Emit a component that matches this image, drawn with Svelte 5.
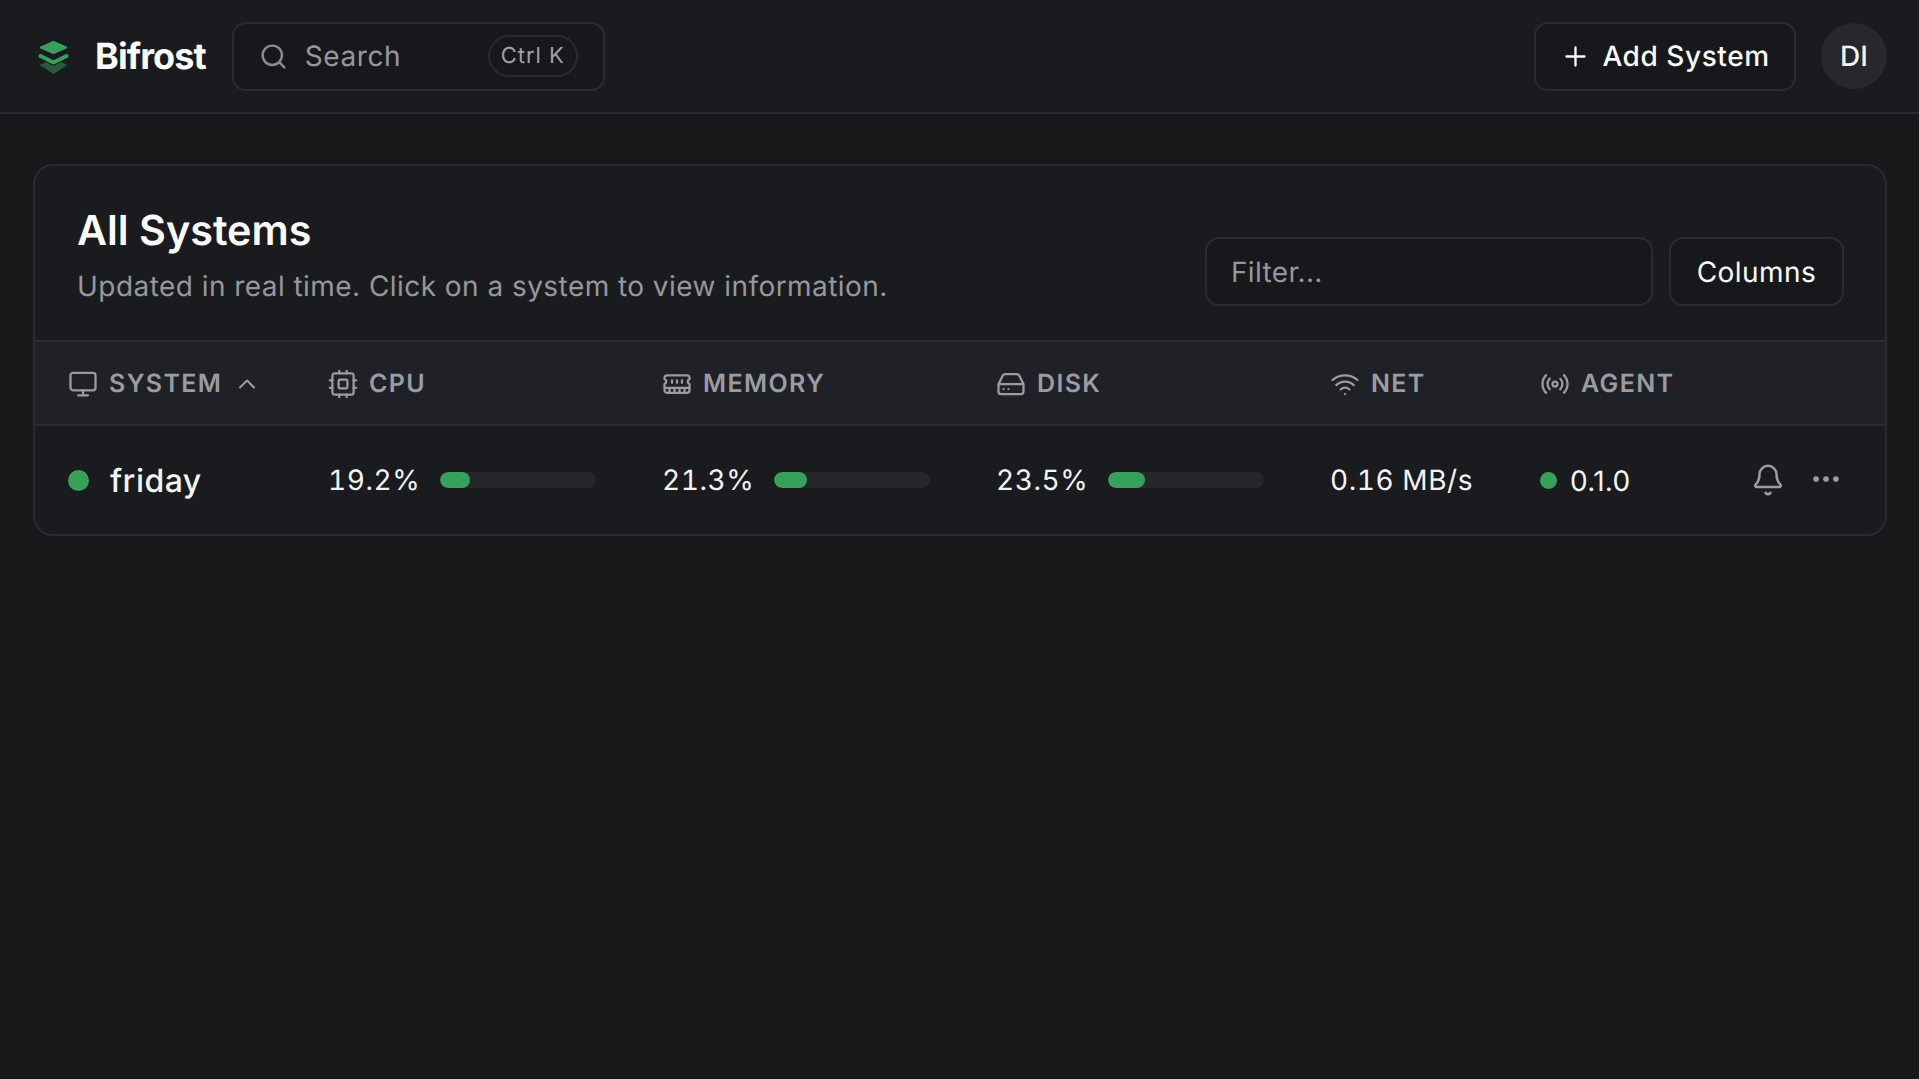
<script>
  const metrics = [
    { value: '19.2%', pct: 19.2 },
    { value: '21.3%', pct: 21.3 },
    { value: '23.5%', pct: 23.5 }
  ];
</script>

<div class="page">
  <header class="topbar">
    <div class="brand">
      <svg class="logo" viewBox="0 0 32 34">
        <path class="l3" d="M1.5 24 8 21 15.5 25 23 21 29.5 24 15.5 33Z" />
        <path class="l2" d="M2.5 15 15.5 21.5 28.5 15" />
        <path class="l1" d="M15.5 1 28 6.5 15.5 12 3 6.5Z" />
      </svg>
      <span class="name">Bifrost</span>
    </div>
    <div class="search">
      <svg class="ic search-ic" viewBox="0 0 24 24"><circle cx="11" cy="11" r="8" /><path d="m21 21-4.3-4.3" /></svg>
      <span class="search-text">Search</span>
      <kbd>Ctrl K</kbd>
    </div>
    <div class="spacer"></div>
    <button class="add">
      <svg class="ic plus" viewBox="0 0 24 24"><path d="M5 12h14M12 5v14" /></svg>
      Add System
    </button>
    <div class="avatar">DI</div>
  </header>

  <main class="main">
    <section class="card">
      <div class="card-head">
        <div class="titles">
          <h1>All Systems</h1>
          <p>Updated in real time. Click on a system to view information.</p>
        </div>
        <div class="tools">
          <div class="filter">Filter...</div>
          <button class="columns">Columns</button>
        </div>
      </div>

      <div class="grid head">
        <div class="th">
          <svg class="ic" viewBox="0 0 24 24"><rect x="2" y="3" width="20" height="14" rx="2" /><path d="M8 21h8M12 17v4" /></svg>
          <span>System</span>
          <svg class="ic chev" viewBox="0 0 24 24"><path d="m18 15-6-6-6 6" /></svg>
        </div>
        <div class="th">
          <svg class="ic" viewBox="0 0 24 24"><rect x="3.5" y="3.5" width="17" height="17" rx="2" /><rect x="8.5" y="8.5" width="7" height="7" rx="1" /><path d="M15 1.5v2M15 20.5v2M1.5 15h2M1.5 9h2M20.5 15h2M20.5 9h2M9 1.5v2M9 20.5v2" /></svg>
          <span>CPU</span>
        </div>
        <div class="th">
          <svg class="ic" viewBox="0 0 24 24"><path d="M6 19v-3M10 19v-3M14 19v-3M18 19v-3M8 11V9M16 11V9M12 11V9M2 15h20M2 7a2 2 0 0 1 2-2h16a2 2 0 0 1 2 2v1.1a2 2 0 0 0 0 3.837V17a2 2 0 0 1-2 2H4a2 2 0 0 1-2-2v-5.1a2 2 0 0 0 0-3.837Z" /></svg>
          <span>Memory</span>
        </div>
        <div class="th">
          <svg class="ic" viewBox="0 0 24 24"><path d="M22 12H2M5.45 5.11 2 12v6a2 2 0 0 0 2 2h16a2 2 0 0 0 2-2v-6l-3.45-6.89A2 2 0 0 0 16.76 4H7.24a2 2 0 0 0-1.79 1.11zM6 16h.01M10 16h.01" /></svg>
          <span>Disk</span>
        </div>
        <div class="th">
          <svg class="ic" viewBox="0 0 24 24"><path d="M12 20h.01M2 8.82a15 15 0 0 1 20 0M5 12.859a10 10 0 0 1 14 0M8.5 16.429a5 5 0 0 1 7 0" /></svg>
          <span>Net</span>
        </div>
        <div class="th">
          <svg class="ic" viewBox="0 0 24 24"><path d="M4.9 19.1C1 15.2 1 8.8 4.9 4.9M7.8 16.2c-2.3-2.3-2.3-6.1 0-8.5M16.2 7.8c2.3 2.3 2.3 6.1 0 8.5M19.1 4.9C23 8.8 23 15.1 19.1 19" /><circle cx="12" cy="12" r="2" /></svg>
          <span>Agent</span>
        </div>
        <div></div>
      </div>

      <div class="grid row">
        <div class="sys"><i class="dot"></i><span>friday</span></div>
        {#each metrics as m}
          <div class="metric">
            <span class="val">{m.value}</span>
            <div class="track"><div class="fill" style="width: {m.pct}%"></div></div>
          </div>
        {/each}
        <div class="net">0.16 MB/s</div>
        <div class="agent"><i class="dot small"></i><span>0.1.0</span></div>
        <div class="actions">
          <svg class="ic bell" viewBox="0 0 24 24"><path d="M10.268 21a2 2 0 0 0 3.464 0M3.262 15.326A1 1 0 0 0 4 17h16a1 1 0 0 0 .74-1.673C19.41 13.956 18 12.499 18 8A6 6 0 0 0 6 8c0 4.499-1.411 5.956-2.738 7.326" /></svg>
          <svg class="ic more" viewBox="0 0 24 24"><circle cx="12" cy="12" r="1" /><circle cx="19" cy="12" r="1" /><circle cx="5" cy="12" r="1" /></svg>
        </div>
      </div>
    </section>
  </main>
</div>

<style>
  :global(body) {
    margin: 0;
    background: #16181a;
    font-family: Inter, "Liberation Sans", sans-serif;
    color: #f4f4f5;
    text-rendering: geometricPrecision;
  }
  .page { min-height: 1079px; }
  .topbar {
    height: 112px;
    box-sizing: content-box;
    border-bottom: 2px solid #2a2b2f;
    background: #1a1b1e;
    display: flex;
    align-items: center;
    padding: 0 32px 0 38px;
  }
  .brand { display: flex; align-items: center; gap: 25px; margin-right: 26px; }
  .logo { width: 32px; height: 34px; display: block; margin-top: 3px; }
  .l1 { fill: #37a15a; stroke: #37a15a; stroke-width: 2; stroke-linejoin: round; }
  .l2 { fill: none; stroke: #37a15a; stroke-width: 4; stroke-linecap: round; stroke-linejoin: round; }
  .l3 { fill: #245c3b; }
  .name { font-size: 36px; font-weight: 700; letter-spacing: -0.025em; color: #fafafa; }
  .ic {
    fill: none;
    stroke: currentColor;
    stroke-width: 2;
    stroke-linecap: round;
    stroke-linejoin: round;
    flex: none;
  }
  .search {
    width: 373px;
    height: 69px;
    box-sizing: border-box;
    background: #17181b;
    border: 2px solid #2a2b2f;
    border-radius: 14px;
    display: flex;
    align-items: center;
    padding: 0 25px 0 25px;
    color: #96979c;
  }
  .search-ic { width: 29px; height: 29px; margin-right: 17px; color: #8a8b90; }
  .search-text { font-size: 28px; letter-spacing: 0.02em; flex: 1; }
  kbd {
    font-family: inherit;
    font-size: 22px;
    letter-spacing: 0.045em;
    height: 42px;
    width: 90px;
    display: flex;
    align-items: center;
    justify-content: center;
    box-sizing: border-box;
    border: 2px solid #2a2b2f;
    border-radius: 21px;
    color: #a1a1a6;
  }
  .spacer { flex: 1; }
  button {
    font-family: inherit;
    color: #fafafa;
    background: #17181b;
    border: 2px solid #2a2b2f;
    border-radius: 14px;
    font-size: 28px;
    font-weight: 450;
    letter-spacing: 0.02em;
    height: 69px;
    box-sizing: border-box;
    padding: 0;
    cursor: pointer;
    text-rendering: inherit;
  }
  .add {
    width: 262px;
    display: flex;
    align-items: center;
    justify-content: center;
    gap: 11px;
    margin-right: 25px;
  }
  .plus { width: 31px; height: 31px; stroke-width: 1.8; }
  .avatar {
    width: 66px;
    height: 66px;
    border-radius: 50%;
    background: #27282c;
    display: flex;
    align-items: center;
    justify-content: center;
    font-size: 28px;
    font-weight: 450;
  }
  .main { padding: 50px 32px 0 33px; }
  .card {
    background: #1a1b1e;
    border: 2px solid #2a2b2f;
    border-radius: 20px;
    overflow: hidden;
  }
  .card-head {
    display: flex;
    justify-content: space-between;
    align-items: flex-end;
    height: 174px;
    box-sizing: border-box;
    padding: 0 41px 34px 42px;
  }
  h1 { margin: 0; font-size: 41.3px; font-weight: 600; color: #fafafa; line-height: 50px; }
  p { margin: 10px 0 0; font-size: 28px; line-height: 42px; color: #96979c; letter-spacing: 0.016em; }
  .titles { margin-bottom: -1px; }
  .tools { display: flex; gap: 16px; }
  .filter {
    width: 448px;
    height: 69px;
    box-sizing: border-box;
    background: #17181b;
    border: 2px solid #2a2b2f;
    border-radius: 14px;
    display: flex;
    align-items: center;
    padding-left: 24px;
    font-size: 28px;
    letter-spacing: 0.012em;
    color: #96979c;
  }
  .columns { width: 175px; font-weight: 400; letter-spacing: 0.016em; }
  .grid {
    display: grid;
    grid-template-columns: 260px 334px 334px 334px 210px 190px 1fr;
    padding-left: 33px;
    align-items: center;
  }
  .head {
    height: 86px;
    box-sizing: border-box;
    background: #1f2126;
    border-top: 2px solid #2a2b2f;
    border-bottom: 2px solid #2a2b2f;
    padding-top: 2px;
    color: #9b9ca2;
  }
  .th {
    display: flex;
    align-items: center;
    gap: 11px;
    font-size: 25px;
    font-weight: 600;
    letter-spacing: 0.055em;
    text-transform: uppercase;
  }
  .th .ic { width: 30px; height: 30px; stroke-width: 1.8; }
  .th .ic.chev { width: 28px; height: 28px; margin-left: 0; }
  .row { height: 108px; }
  .sys { display: flex; align-items: center; gap: 21px; font-size: 32px; font-weight: 450; letter-spacing: 0.015em; }
  .dot { display: block; width: 21px; height: 21px; border-radius: 50%; background: #37a15a; flex: none; }
  .dot.small { width: 17px; height: 17px; }
  .metric { display: flex; align-items: center; font-size: 28px; letter-spacing: 0.02em; font-variant-numeric: tabular-nums; }
  .val { width: 112px; }
  .track { width: 156px; height: 16px; border-radius: 8px; background: #26272b; overflow: hidden; }
  .fill { height: 100%; border-radius: 8px; background: #37a15a; }
  .net { font-size: 28px; letter-spacing: 0.02em; font-variant-numeric: tabular-nums; }
  .agent { display: flex; align-items: center; gap: 13px; font-size: 28px; letter-spacing: 0.01em; }
  .agent span { margin-top: 2px; }
  .actions { display: flex; align-items: center; gap: 24px; justify-content: flex-end; padding-right: 42px; color: #9b9ca2; }
  .bell { width: 34px; height: 34px; stroke-width: 1.8; margin-top: -1px; }
  .more { width: 34px; height: 34px; margin-top: -2px; }
</style>
